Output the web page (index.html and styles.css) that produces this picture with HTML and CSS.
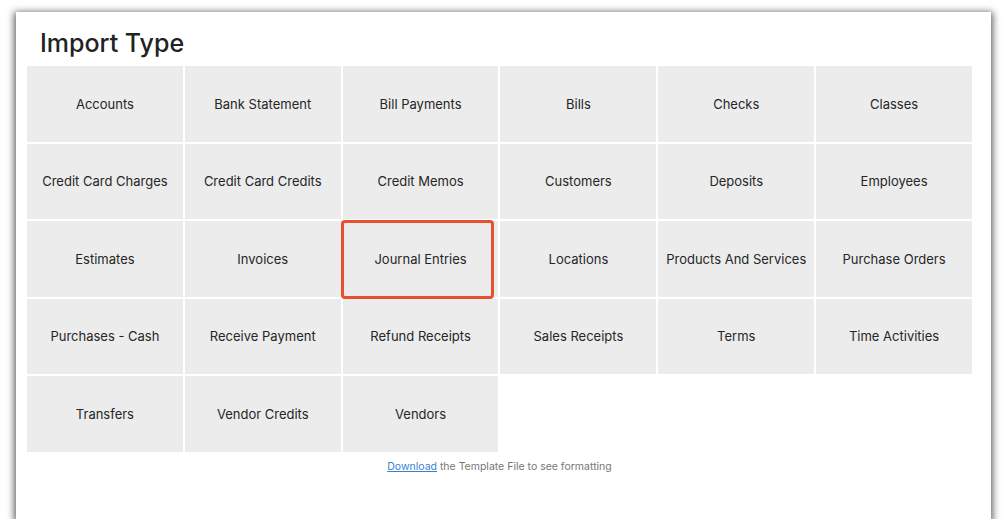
FILE: index.html
```html
<!DOCTYPE html>
<html lang="en">

<head>
    <meta charset="UTF-8">
    <title>Import Type</title>
    <link rel="stylesheet" href="styles.css">
</head>

<body>
    <div class="frame">
        <h1>Import Type</h1>

        <div class="types">
            <div class="type">Accounts</div>
            <div class="type">Bank Statement</div>
            <div class="type">Bill Payments</div>
            <div class="type">Bills</div>
            <div class="type">Checks</div>
            <div class="type">Classes</div>

            <div class="type">Credit Card Charges</div>
            <div class="type">Credit Card Credits</div>
            <div class="type">Credit Memos</div>
            <div class="type">Customers</div>
            <div class="type">Deposits</div>
            <div class="type">Employees</div>

            <div class="type">Estimates</div>
            <div class="type">Invoices</div>
            <div class="type selected">Journal Entries</div>
            <div class="type">Locations</div>
            <div class="type">Products And Services</div>
            <div class="type">Purchase Orders</div>

            <div class="type">Purchases - Cash</div>
            <div class="type">Receive Payment</div>
            <div class="type">Refund Receipts</div>
            <div class="type">Sales Receipts</div>
            <div class="type">Terms</div>
            <div class="type">Time Activities</div>

            <div class="type">Transfers</div>
            <div class="type">Vendor Credits</div>
            <div class="type">Vendors</div>
        </div>

        <p class="hint"><a href="#">Download</a> the Template File to see formatting</p>
    </div>
</body>

</html>
```

FILE: styles.css
```css
body {
    margin: 0;
    padding: 12px 0 0 16px;
    background: #ffffff;
    font-family: Inter, "Noto Sans", sans-serif;
}

.frame {
    box-sizing: border-box;
    width: 975px;
    height: 507px;
    padding: 15px 19px 0 11px;
    background: #ffffff;
    box-shadow: 0 2px 7px 2px rgba(0, 0, 0, 0.6);
}

h1 {
    margin: 0 0 7px;
    padding-left: 13px;
    font-size: 25px;
    line-height: 32px;
    font-weight: 500;
    color: #222;
}

.types {
    display: grid;
    grid-template-columns: repeat(6, 1fr);
    grid-auto-rows: 75.5px;
    gap: 2px;
}

.type {
    position: relative;
    display: flex;
    align-items: center;
    justify-content: center;
    background: #ececec;
    font-size: 13px;
    color: #262626;
}

/* red outline drawn over the picked cell */
.type.selected::after {
    content: "";
    position: absolute;
    top: -1px;
    left: -2px;
    right: 4px;
    bottom: -2px;
    border: 3px solid #e5522f;
    border-radius: 4px;
}

.hint {
    margin: 8px 0 0;
    text-align: center;
    font-size: 10.5px;
    color: #777;
}

.hint a {
    color: #3b7fd4;
}
```
